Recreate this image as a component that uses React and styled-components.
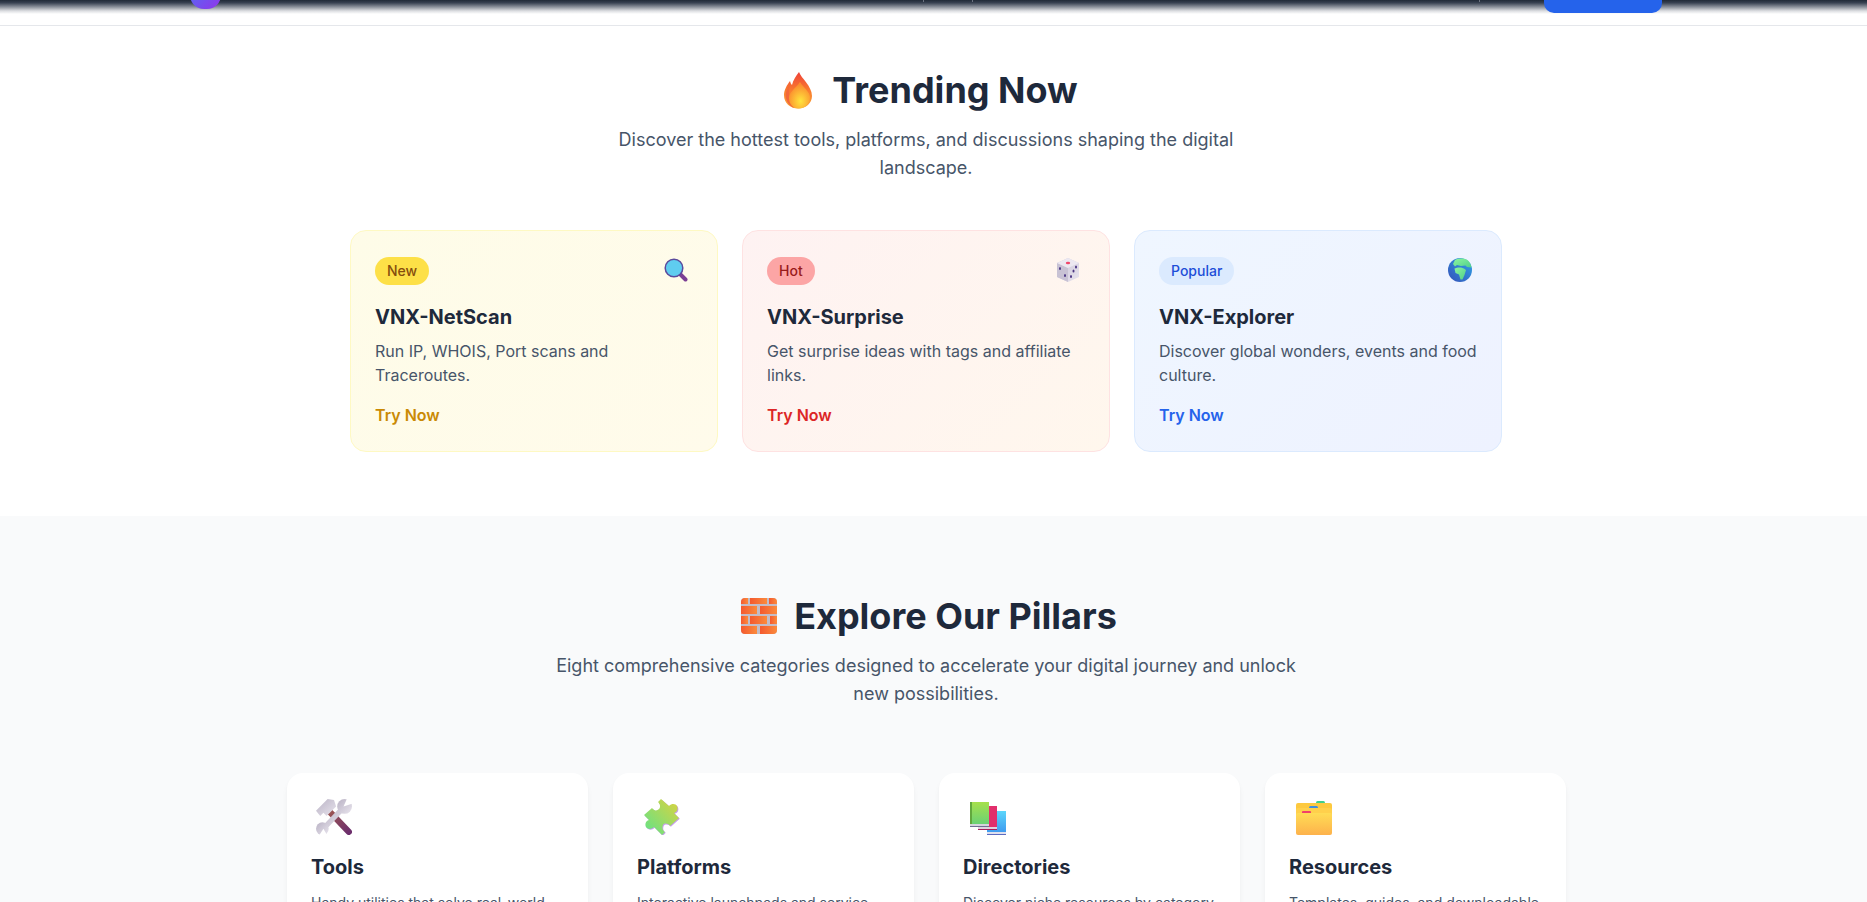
import React from "react";
import styled, { createGlobalStyle } from "styled-components";

const GlobalStyle = createGlobalStyle`
  html, body {
    margin: 0;
    height: 902px;
    overflow: hidden;
    background: #fff;
    font-family: Inter, "Noto Sans", sans-serif;
    color: #1e293b;
  }
  * { box-sizing: border-box; }
`;

// clipped nav: page is scrolled so only its last pixels show
const Header = styled.header`
  position: relative;
  height: 26px;
  background: #fff;
  border-bottom: 1px solid #e5e7eb;
  overflow: hidden;
`;

const HeaderShade = styled.div`
  position: absolute;
  inset: 0 0 auto 0;
  height: 14px;
  background: linear-gradient(180deg, #1f2937 0%, #374151 20%, #8b919b 50%, #dcdee1 78%, #ffffff 100%);
`;

const NavTick = styled.span`
  position: absolute;
  top: 0;
  left: ${(p) => p.$left}px;
  width: 1px;
  height: 2px;
  background: #6b7280;
`;

const LogoStub = styled.span`
  position: absolute;
  top: -31px;
  left: 190px;
  width: 31px;
  height: 40px;
  border-radius: 14px;
  background: linear-gradient(135deg, #3b82f6, #9333ea);
`;

const ButtonStub = styled.span`
  position: absolute;
  top: -28px;
  left: 1544px;
  width: 118px;
  height: 41px;
  border-radius: 10px;
  background: #2563eb;
`;

const Section = styled.section`
  padding: ${(p) => p.$pad};
  background: ${(p) => p.$bg};
`;

const Heading = styled.h2`
  display: flex;
  justify-content: center;
  align-items: center;
  gap: ${(p) => p.$gap}px;
  margin: 0 0 16px;
  font-size: 36px;
  line-height: 40px;
  font-weight: 700;
  color: #1e293b;
`;

const HeadingIcon = styled.span`
  display: flex;
  flex: none;
  justify-content: center;
  align-items: center;
  width: 48px;
  height: 40px;
`;

const Lead = styled.p`
  margin: 0 auto ${(p) => p.$after}px;
  max-width: ${(p) => p.$width}px;
  font-size: 18px;
  line-height: 28px;
  text-align: center;
  color: #475569;
`;

const TrendGrid = styled.div`
  display: grid;
  grid-template-columns: repeat(3, 368px);
  gap: 24px;
  justify-content: center;
`;

const TrendCard = styled.article`
  padding: 24px;
  border: 1px solid ${(p) => p.$border};
  border-radius: 16px;
  background: linear-gradient(135deg, ${(p) => p.$from}, ${(p) => p.$to});
`;

const CardTop = styled.div`
  display: flex;
  justify-content: space-between;
  align-items: center;
  height: 32px;
  margin-bottom: 16px;
`;

const CardIcon = styled.span`
  display: block;
  margin: -2px 5px 0 0;
`;

const Badge = styled.span`
  padding: 4px 12px;
  border-radius: 999px;
  font-size: 14px;
  line-height: 20px;
  font-weight: 500;
  background: ${(p) => p.$bg};
  color: ${(p) => p.$color};
`;

const Emoji = styled.svg`
  display: block;
  flex: none;
  width: ${(p) => p.$size}px;
  height: ${(p) => p.$size}px;
`;

const TrendTitle = styled.h3`
  margin: 0 0 8px;
  font-size: 20px;
  line-height: 28px;
  font-weight: 700;
  color: #1e293b;
`;

const TrendText = styled.p`
  margin: 0 0 16px;
  font-size: 16px;
  line-height: 24px;
  color: #475569;
`;

const TryLink = styled.a`
  display: block;
  font-size: 16px;
  line-height: 24px;
  font-weight: 600;
  color: ${(p) => p.$color};
`;

const PillarGrid = styled.div`
  display: grid;
  grid-template-columns: repeat(4, 301px);
  gap: 25px;
  justify-content: center;
  padding-left: 1px;
`;

const PillarCard = styled.article`
  padding: 24px;
  border-radius: 16px;
  background: #fff;
  box-shadow: 0 4px 6px -1px rgba(0, 0, 0, 0.06), 0 2px 4px -2px rgba(0, 0, 0, 0.05);
`;

const PillarIcon = styled.div`
  height: 40px;
  margin-bottom: 16px;
  padding: 2px 0 0 ${(p) => p.$inset}px;
`;

const PillarTitle = styled.h3`
  margin: 0 0 12px;
  font-size: 20px;
  line-height: 28px;
  font-weight: 700;
  color: #1e293b;
`;

const PillarText = styled.p`
  margin: 0;
  font-size: 14px;
  line-height: 20px;
  color: #475569;
`;

const Page = styled.main`
  width: 1852px;
`;

const Defs = styled.svg`
  position: absolute;
  width: 0;
  height: 0;
`;

const SharedGradients = () => (
  <Defs aria-hidden="true">
    <defs>
      <linearGradient id="flameOuter" x1="0.5" y1="0" x2="0.5" y2="1">
        <stop offset="0" stopColor="#ef4138" />
        <stop offset="0.5" stopColor="#f97b2e" />
        <stop offset="1" stopColor="#f9a63c" />
      </linearGradient>
      <radialGradient id="flameInner" cx="0.55" cy="0.72" r="0.62">
        <stop offset="0" stopColor="#ffe43d" />
        <stop offset="1" stopColor="#fb8c2e" />
      </radialGradient>
      <linearGradient id="brick" x1="0" y1="0" x2="1" y2="0">
        <stop offset="0" stopColor="#f4592f" />
        <stop offset="1" stopColor="#fb8a3c" />
      </linearGradient>
      <linearGradient id="steel" x1="0" y1="0" x2="1" y2="1">
        <stop offset="0" stopColor="#b9b2c4" />
        <stop offset="1" stopColor="#e9e5ee" />
      </linearGradient>
      <linearGradient id="handle" x1="0" y1="0" x2="1" y2="1">
        <stop offset="0" stopColor="#a0594f" />
        <stop offset="1" stopColor="#6d2f6c" />
      </linearGradient>
      <linearGradient id="puzzle" x1="0" y1="1" x2="1" y2="0">
        <stop offset="0" stopColor="#5fe38a" />
        <stop offset="1" stopColor="#dcd23e" />
      </linearGradient>
      <linearGradient id="greenBook" x1="0.5" y1="0" x2="0.5" y2="1">
        <stop offset="0" stopColor="#a6e04c" />
        <stop offset="1" stopColor="#63cf7a" />
      </linearGradient>
      <linearGradient id="blueBook" x1="0.5" y1="0" x2="0.5" y2="1">
        <stop offset="0" stopColor="#5cd6fb" />
        <stop offset="1" stopColor="#3b93ee" />
      </linearGradient>
      <linearGradient id="folder" x1="0.5" y1="0" x2="0.5" y2="1">
        <stop offset="0" stopColor="#ffdc55" />
        <stop offset="1" stopColor="#fdb24c" />
      </linearGradient>
      <linearGradient id="globe" x1="0" y1="1" x2="1" y2="0">
        <stop offset="0" stopColor="#3550b8" />
        <stop offset="1" stopColor="#2fa5e8" />
      </linearGradient>
      <linearGradient id="land" x1="0" y1="0" x2="1" y2="1">
        <stop offset="0" stopColor="#8df5a0" />
        <stop offset="1" stopColor="#4fd08a" />
      </linearGradient>
      <linearGradient id="dice" x1="0" y1="0" x2="1" y2="1">
        <stop offset="0" stopColor="#c9c3d6" />
        <stop offset="1" stopColor="#e8e4ee" />
      </linearGradient>
    </defs>
  </Defs>
);

const Flame = () => (
  <Emoji $size={48} viewBox="0 0 48 48">
    <path d="M25 6c2 6 13 14 13 24 0 7-6 12.500-14 12.500S10 37 10 29c0-5 3-10 6-14 .5 2 1 3 2 4 1-5 4-9 7-13z" fill="url(#flameOuter)" />
    <path d="M16 18c-3 5-5 9-4 14 1 5 4 8 8 10-4-6-6-15-4-24z" fill="#f2683a" />
    <path d="M26 16c3 5 10 10 10 15 0 7-5 11.500-11 11.500S15 38 15 32c0-6 7-10 11-16z" fill="url(#flameInner)" />
  </Emoji>
);

const Magnifier = () => (
  <Emoji $size={24} viewBox="0 0 24 24">
    <path d="M15.500 15.500l6 6" stroke="#7b3f94" strokeWidth="4" strokeLinecap="round" />
    <circle cx="10" cy="10" r="8.800" fill="#5fcdf0" stroke="#5b4a9c" strokeWidth="1.500" />
  </Emoji>
);

const Dice = () => (
  <Emoji $size={24} viewBox="0 0 24 24">
    <path d="M12 0l11 5v14l-11 5-11-5V5z" fill="url(#dice)" />
    <path d="M1 5l11 5v14L1 19z" fill="#c8c2d4" />
    <path d="M12 0l11 5-11 5L1 5z" fill="#ece8f1" />
    <ellipse cx="12" cy="5" rx="2.200" ry="1.200" fill="#f0476b" />
    <g fill="#4a3583">
      <ellipse cx="4" cy="10.500" rx="1" ry="1.600" />
      <ellipse cx="9" cy="17.500" rx="1" ry="1.600" />
      <ellipse cx="20" cy="9" rx="1" ry="1.600" />
      <ellipse cx="17.500" cy="13" rx="1" ry="1.600" />
      <ellipse cx="15" cy="18.500" rx="1" ry="1.600" />
    </g>
  </Emoji>
);

const Globe = () => (
  <Emoji $size={24} viewBox="0 0 24 24">
    <circle cx="12" cy="12" r="12" fill="url(#globe)" />
    <path d="M7 2C11 0 17 0 20 2.500 22 4 23 7 23.500 9.500L19 9l-1.500-1.500L13 8 9 7 7 8.500 5 6z" fill="url(#land)" />
    <path d="M6.500 10.500C9 9 14 9 16 10.500l2 1.500-1.500 5-2 4.500h-2L11 16.500 7.500 15z" fill="url(#land)" />
  </Emoji>
);

const Bricks = () => (
  <Emoji $size={36} viewBox="0 0 36 36">
    <rect width="36" height="36" rx="4" fill="#c4bcc6" />
    <g fill="url(#brick)">
      <path d="M0 4a4 4 0 0 1 4-4h3v6H0z" />
      <rect x="9" width="17" height="6" />
      <path d="M28 0h4a4 4 0 0 1 4 4v2h-8z" />
      <rect y="8" width="16" height="8" />
      <rect x="19" y="8" width="17" height="8" />
      <rect y="18" width="7" height="8" />
      <rect x="9" y="18" width="17" height="8" />
      <rect x="29" y="18" width="7" height="8" />
      <path d="M0 28h16v8H4a4 4 0 0 1-4-4z" />
      <path d="M19 28h17v4a4 4 0 0 1-4 4H19z" />
    </g>
  </Emoji>
);

const Tools = () => (
  <Emoji $size={36} viewBox="1 1 34 34">
    <path d="M12 11l20 21" stroke="url(#handle)" strokeWidth="6" strokeLinecap="round" />
    <polygon points="1,12 12,1 18,2 20,8 11,17 8,14 5,17" fill="url(#steel)" />
    <path d="M27 9L7 30" stroke="url(#steel)" strokeWidth="5" strokeLinecap="round" />
    <circle cx="28" cy="8" r="7" fill="url(#steel)" />
    <polygon points="27,8 31,-1 37,5" fill="#fff" />
    <circle cx="7" cy="29" r="6" fill="url(#steel)" />
    <polygon points="8,29 3,37 12,36" fill="#fff" />
  </Emoji>
);

const Puzzle = () => (
  <Emoji $size={36} viewBox="0 0 36 36">
    <path d="M17 0l8 7c3-3 7-2 8 0s1 6-3 7l5 5-9 8c-2-3-6-3-7-1s-1 5 2 7l-3 3-8-8c-3 3-7 2-8 0s-1-6 3-7l-5-5 8-7c2 3 5 3 7 1s1-5-1-7z" fill="#c79cf0" transform="translate(.8 .8)" />
    <path d="M17 0l8 7c3-3 7-2 8 0s1 6-3 7l5 5-9 8c-2-3-6-3-7-1s-1 5 2 7l-3 3-8-8c-3 3-7 2-8 0s-1-6 3-7l-5-5 8-7c2 3 5 3 7 1s1-5-1-7z" fill="url(#puzzle)" />
  </Emoji>
);

const Books = () => (
  <Emoji $size={36} viewBox="0 0 36 36">
    <rect x="17" y="12" width="19" height="24" fill="url(#blueBook)" />
    <rect x="17" y="33" width="19" height="2" fill="#dfe0ee" />
    <rect x="17" y="35" width="19" height="1" fill="#5b6bc0" />
    <rect x="8" y="7" width="19" height="24" fill="#e22f6c" />
    <rect x="8" y="28" width="19" height="2" fill="#dfd4e0" />
    <rect x="8" y="30" width="19" height="1" fill="#a81d5c" />
    <rect y="3" width="19" height="25" fill="url(#greenBook)" />
    <rect y="3" width="2" height="25" fill="#62a83e" />
    <rect y="25" width="19" height="2" fill="#d5d3dd" />
    <rect y="27" width="19" height="1" fill="#6e6f92" />
  </Emoji>
);

const Folder = () => (
  <Emoji $size={36} viewBox="0 0 36 36">
    <rect x="20" y="2" width="9" height="5" rx="1.500" fill="#41cf8a" />
    <rect y="4" width="36" height="12" rx="2" fill="#fdc93f" />
    <rect x="13" y="7" width="9" height="4" rx="1.500" fill="#3f8fe0" />
    <rect y="9" width="36" height="12" rx="2" fill="#ffd04c" />
    <rect x="6" y="12" width="9" height="4" rx="1" fill="#f0406a" />
    <rect y="14" width="36" height="22" rx="2" fill="url(#folder)" />
  </Emoji>
);

const trending = [
  { badge: "New", badgeBg: "#fde047", badgeColor: "#854d0e", Icon: Magnifier, title: "VNX-NetScan", text: "Run IP, WHOIS, Port scans and Traceroutes.", link: "#ca8a04", from: "#fefce8", to: "#fffbeb", border: "#fef9c3" },
  { badge: "Hot", badgeBg: "#fca5a5", badgeColor: "#991b1b", Icon: Dice, title: "VNX-Surprise", text: "Get surprise ideas with tags and affiliate links.", link: "#dc2626", from: "#fef2f2", to: "#fff7ed", border: "#fee2e2" },
  { badge: "Popular", badgeBg: "#dbeafe", badgeColor: "#1d4ed8", Icon: Globe, title: "VNX-Explorer", text: "Discover global wonders, events and food culture.", link: "#2563eb", from: "#eff6ff", to: "#eef2ff", border: "#dbeafe" },
];

const pillars = [
  { Icon: Tools, inset: 5, title: "Tools", text: "Handy utilities that solve real-world" },
  { Icon: Puzzle, inset: 7, title: "Platforms", text: "Interactive launchpads and service" },
  { Icon: Books, inset: 7, title: "Directories", text: "Discover niche resources by category" },
  { Icon: Folder, inset: 7, title: "Resources", text: "Templates, guides, and downloadable" },
];

export default function App() {
  return (
    <>
      <GlobalStyle />
      <SharedGradients />
      <Header>
        <HeaderShade />
        <NavTick $left={923} />
        <NavTick $left={972} />
        <NavTick $left={1479} />
        <LogoStub />
        <ButtonStub />
      </Header>
      <Page>
        <Section $pad="44px 0 64px" $bg="#fff">
          <Heading $gap={10}>
            <HeadingIcon><Flame /></HeadingIcon>
            Trending Now
          </Heading>
          <Lead $width={672} $after={48}>
            Discover the hottest tools, platforms, and discussions shaping the digital landscape.
          </Lead>
          <TrendGrid>
            {trending.map(({ Icon, ...t }) => (
              <TrendCard key={t.title} $from={t.from} $to={t.to} $border={t.border}>
                <CardTop>
                  <Badge $bg={t.badgeBg} $color={t.badgeColor}>{t.badge}</Badge>
                  <CardIcon><Icon /></CardIcon>
                </CardTop>
                <TrendTitle>{t.title}</TrendTitle>
                <TrendText>{t.text}</TrendText>
                <TryLink $color={t.link}>Try Now</TryLink>
              </TrendCard>
            ))}
          </TrendGrid>
        </Section>
      </Page>
      <Section $pad="80px 0 0" $bg="#f9fafb">
        <Page>
          <Heading $gap={11}>
            <HeadingIcon><Bricks /></HeadingIcon>
            Explore Our Pillars
          </Heading>
          <Lead $width={768} $after={65}>
            Eight comprehensive categories designed to accelerate your digital journey and unlock new possibilities.
          </Lead>
          <PillarGrid>
            {pillars.map(({ Icon, inset, title, text }) => (
              <PillarCard key={title}>
                <PillarIcon $inset={inset}><Icon /></PillarIcon>
                <PillarTitle>{title}</PillarTitle>
                <PillarText>{text}</PillarText>
              </PillarCard>
            ))}
          </PillarGrid>
        </Page>
      </Section>
    </>
  );
}
